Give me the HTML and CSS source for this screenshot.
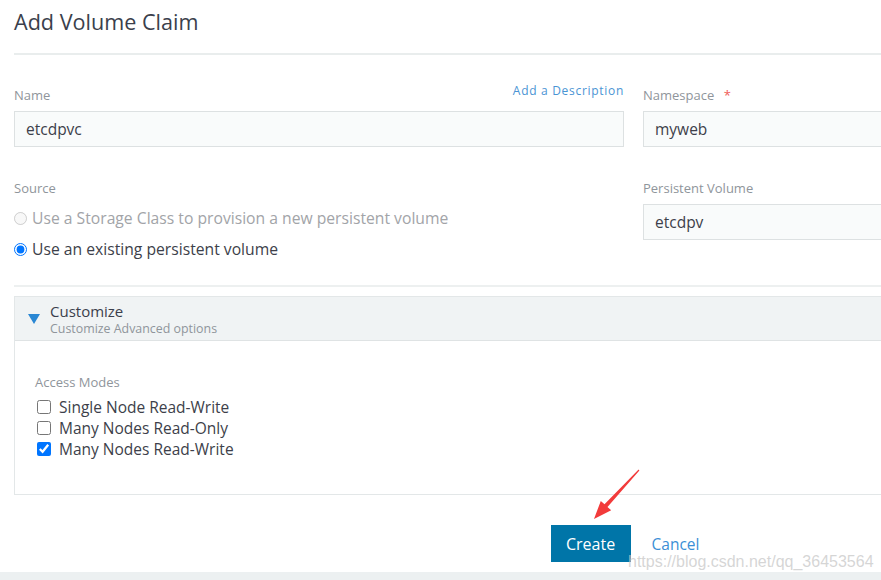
FILE: index.html
```html
<!DOCTYPE html>
<html lang="en">
<head>
<meta charset="utf-8">
<title>Add Volume Claim</title>
<link rel="stylesheet" href="styles.css">
</head>
<body>
<div class="page">
  <header class="page-header">
    <h1>Add Volume Claim</h1>
  </header>

  <div class="form-grid">
    <div class="field">
      <div class="label-row">
        <label class="field-label" for="pvc-name">Name</label>
        <a class="desc-link" href="#">Add a Description</a>
      </div>
      <input class="text-input" id="pvc-name" type="text" value="etcdpvc">
    </div>

    <div class="field">
      <label class="field-label" for="pvc-ns">Namespace <span class="required">*</span></label>
      <input class="text-input" id="pvc-ns" type="text" value="myweb">
    </div>

    <div class="field">
      <span class="field-label">Source</span>
      <div class="radio-list">
        <label class="radio-option is-disabled">
          <input type="radio" name="source" disabled>
          <span>Use a Storage Class to provision a new persistent volume</span>
        </label>
        <label class="radio-option">
          <input type="radio" name="source" checked>
          <span>Use an existing persistent volume</span>
        </label>
      </div>
    </div>

    <div class="field">
      <label class="field-label" for="pvc-pv">Persistent Volume</label>
      <input class="text-input" id="pvc-pv" type="text" value="etcdpv">
    </div>
  </div>

  <div class="divider"></div>

  <section class="accordion">
    <div class="accordion-header">
      <svg class="caret" width="12" height="10" viewBox="0 0 12 10" aria-hidden="true">
        <polygon points="0,0 12,0 6,10" fill="#2a87d3"/>
      </svg>
      <div class="accordion-titles">
        <div class="accordion-title">Customize</div>
        <div class="accordion-subtitle">Customize Advanced options</div>
      </div>
    </div>
    <div class="accordion-body">
      <span class="field-label">Access Modes</span>
      <div class="check-list">
        <label class="check-option"><input type="checkbox"><span>Single Node Read-Write</span></label>
        <label class="check-option"><input type="checkbox"><span>Many Nodes Read-Only</span></label>
        <label class="check-option"><input type="checkbox" checked><span>Many Nodes Read-Write</span></label>
      </div>
    </div>
  </section>

  <div class="actions">
    <button class="btn-primary" type="button">Create</button>
    <a class="btn-link" href="#">Cancel</a>
  </div>

  <svg class="pointer-arrow" width="881" height="580" viewBox="0 0 881 580" aria-hidden="true">
    <polygon points="638.6,469.6 639.4,470.4 607.5,506.9 611.2,510.3 594,519 600.8,500.9 604.5,504.3" fill="#f23b3b"/>
  </svg>
  <div class="watermark">https://blog.csdn.net/qq_36453564</div>
</div>
</body>
</html>
```

FILE: styles.css
```css
html, body {
  margin: 0;
  overflow: hidden;
}

body {
  background: #ecf0f1;
  font-family: "Open Sans", "DejaVu Sans", sans-serif;
  color: #3d3f4a;
}

.page {
  position: relative;
  width: 1222px;
  padding: 0 14px 10px;
  background: #fff;
}

/* title bar */
.page-header {
  padding: 7px 0 16px;
  border-bottom: 2px solid #e9eded;
}

.page-header h1 {
  margin: 0;
  font-size: 21.6px;
  line-height: 30px;
  font-weight: 400;
  color: #3b3f4c;
}

/* two column form */
.form-grid {
  display: grid;
  grid-template-columns: 610px 1fr;
  column-gap: 19px;
  row-gap: 33px;
  margin-top: 32px;
}

.field {
  display: flex;
  flex-direction: column;
}

.label-row {
  display: flex;
  justify-content: space-between;
  align-items: flex-start;
}

.field-label {
  display: block;
  font-size: 13px;
  line-height: 16px;
  color: #8f959b;
  margin-bottom: 8px;
}

.required {
  color: #ef5b57;
  margin-left: 6px;
}

.desc-link {
  font-size: 12px;
  line-height: 16px;
  letter-spacing: 0.7px;
  color: #4a94d4;
  text-decoration: none;
  margin-top: -4px;
}

.text-input {
  box-sizing: border-box;
  height: 36px;
  margin: 0;
  padding: 0 11px;
  border: 1px solid #dde1e2;
  border-radius: 0;
  background: #f9fbfb;
  font-family: inherit;
  font-size: 15.5px;
  color: #3d3f4a;
  outline: none;
}

/* source radios */
.radio-list {
  display: flex;
  flex-direction: column;
  gap: 7px;
  padding-top: 2px;
}

.radio-option {
  display: flex;
  align-items: center;
  gap: 5px;
  height: 24px;
  font-size: 15.7px;
  color: #3d3f4a;
}

.radio-option input {
  width: 13px;
  height: 13px;
  margin: 0;
}

.radio-option.is-disabled {
  color: #a2a4a8;
}

.divider {
  height: 2px;
  margin-top: 24px;
  background: #edf0f0;
}

/* advanced options panel */
.accordion {
  margin-top: 9px;
  border: 1px solid #e3e7e8;
}

.accordion-header {
  display: flex;
  align-items: center;
  gap: 10px;
  padding: 5px 13px 4px;
  background: #f0f3f4;
  border-bottom: 1px solid #dfe3e4;
}

.caret {
  display: block;
  flex: none;
}

.accordion-title {
  font-size: 15px;
  line-height: 18px;
  color: #3b3f4c;
}

.accordion-subtitle {
  margin-top: 2px;
  font-size: 12.4px;
  line-height: 14px;
  color: #8f959b;
}

.accordion-body {
  padding: 33px 20px 35px;
}

.accordion-body .field-label {
  margin-bottom: 6px;
}

.check-list {
  display: flex;
  flex-direction: column;
}

.check-option {
  display: flex;
  align-items: center;
  height: 21px;
  font-size: 15.5px;
  color: #3d3f4a;
}

.check-option span {
  padding-top: 1px;
}

.check-option input {
  width: 14px;
  height: 14px;
  margin: 0 8px 0 2px;
}

/* footer buttons */
.actions {
  display: flex;
  justify-content: center;
  align-items: center;
  gap: 21px;
  margin-top: 30px;
}

.btn-primary {
  width: 80px;
  height: 37px;
  border: 0;
  border-radius: 0;
  background: #0075a8;
  color: #fff;
  font-family: inherit;
  font-size: 16px;
}

.btn-link {
  font-size: 15.5px;
  line-height: 18px;
  color: #3b8fd6;
  text-decoration: none;
}

/* overlays */
.pointer-arrow {
  position: absolute;
  left: 0;
  top: 0;
  pointer-events: none;
}

.watermark {
  position: absolute;
  left: 628px;
  top: 554px;
  font-family: "Liberation Sans", Arial, sans-serif;
  font-size: 16px;
  line-height: 16px;
  color: rgba(200, 200, 200, 0.75);
  pointer-events: none;
  white-space: nowrap;
}
```
